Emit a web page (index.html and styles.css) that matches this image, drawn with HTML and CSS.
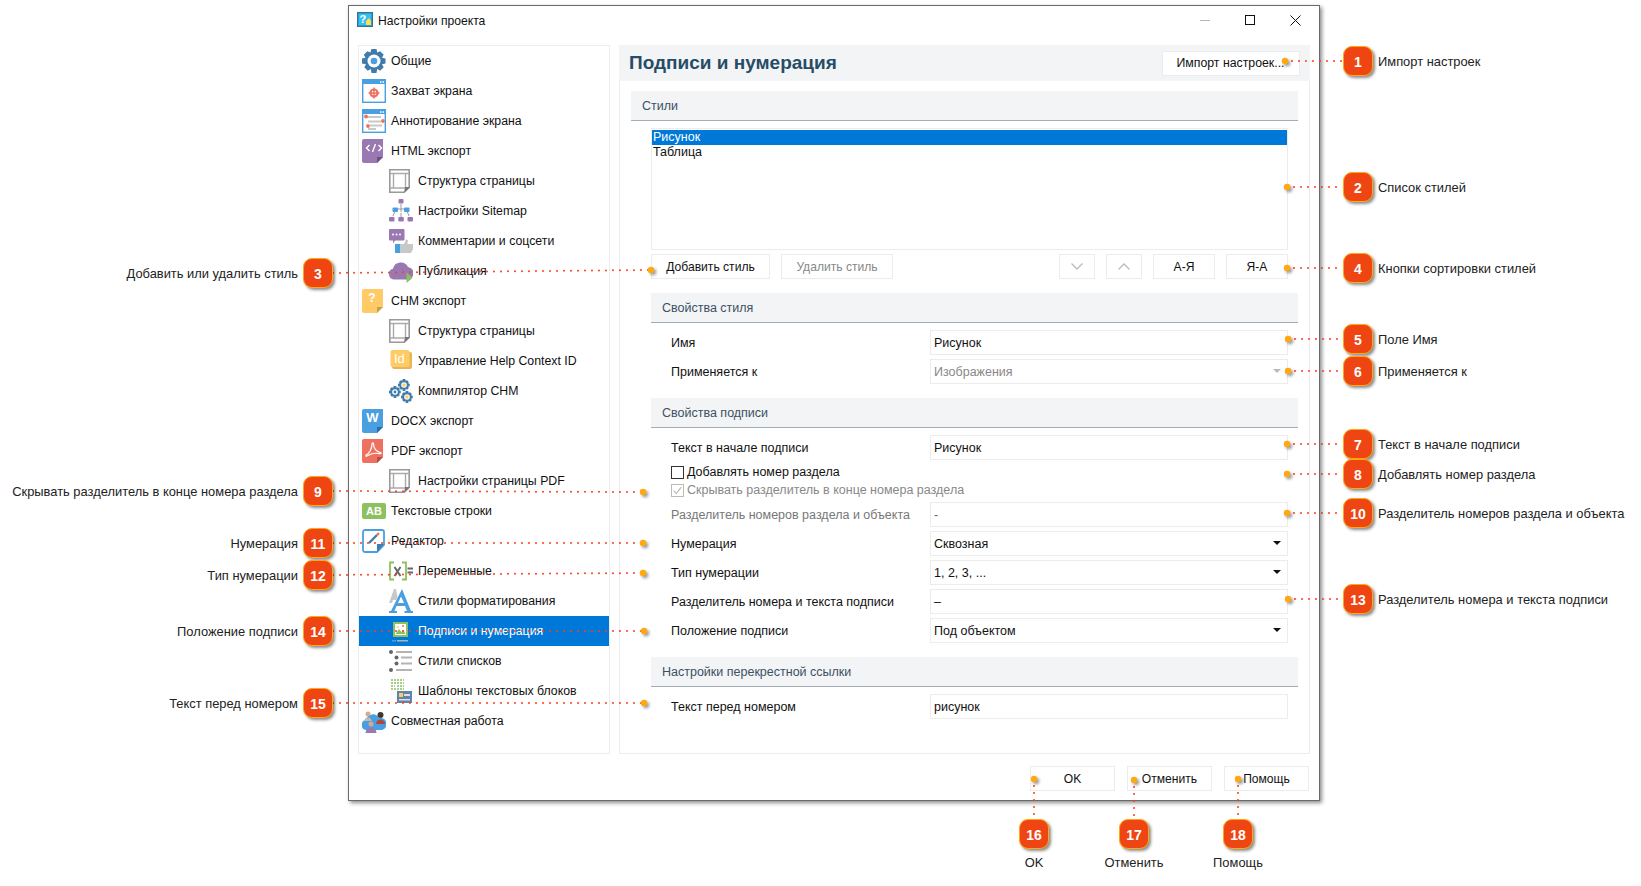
FILE: index.html
```html
<!DOCTYPE html>
<html lang="ru">
<head>
<meta charset="utf-8">
<title>Настройки проекта</title>
<link rel="stylesheet" href="styles.css">
</head>
<body>
<svg class="defs" width="0" height="0" aria-hidden="true">
  <symbol id="i-page" viewBox="0 0 24 24">
    <path d="M.8.8h19.400v17.500l-5 4.900H.8z" fill="#fff" stroke="#999" stroke-width="1.600"/>
    <path d="M1 4.500h19M1 19h14M4.500 4.500V19M16.500 4.500V18" fill="none" stroke="#aaa" stroke-width="1.400"/>
    <path d="M20.500 18v.5l-5 5V18z" fill="#777"/>
  </symbol>
  <symbol id="i-gear" viewBox="0 0 24 24">
    <path fill="#3f7cab" d="M9.500 0h5l.7 3.600 3-1.300 3.500 3.500-1.700 2.900 3.500.8v5l-3.500.8 1.700 2.900-3.500 3.500-3-1.700-.7 4h-5l-.7-4-3 1.700-3.500-3.500 1.700-2.900L0 14.500v-5l3.500-.8-1.700-2.900 3.500-3.500 3 1.300z"/>
  </symbol>
</svg>

<div class="window">
  <div class="titlebar">
    <svg class="app-icon" viewBox="0 0 16 16"><rect x=".5" y=".5" width="15" height="14" fill="#1fa3d8" stroke="#3a6f8f"/><rect x="2" y="2" width="12" height="11" fill="#37c0ee"/><text x="2.500" y="11" class="app-q">?</text><path d="M9 9l3-3 2 3v4H9z" fill="#ffe04a"/></svg>
    <span class="title-text">Настройки проекта</span>
    <div class="win-controls">
      <span class="wc wc-min"></span>
      <span class="wc wc-max"></span>
      <svg class="wc-close" viewBox="0 0 11 11"><path d="M.5.500l10 10M10.500.500l-10 10" stroke="#111" stroke-width="1" fill="none"/></svg>
    </div>
  </div>

  <div class="columns">
    <nav class="sidebar">
      <div class="nav-row">
        <svg class="ico" viewBox="0 0 24 24"><use href="#i-gear"/><circle cx="12" cy="12" r="6.500" fill="#fff"/><circle cx="12" cy="12" r="3.300" fill="#4a9fe0"/></svg>
        <span>Общие</span>
      </div>
      <div class="nav-row">
        <svg class="ico" viewBox="0 0 24 24"><rect x=".7" y=".7" width="22.600" height="22.600" fill="#fff" stroke="#4a9fe0" stroke-width="1.400"/><rect x="1" y="1" width="22" height="4" fill="#4a9fe0"/><rect x="18" y="2.300" width="1.500" height="1.500" fill="#fff"/><rect x="20.500" y="2.300" width="1.500" height="1.500" fill="#fff"/><circle cx="12" cy="14" r="3.500" fill="none" stroke="#f0705f" stroke-width="2.200"/><path d="M12 8.500v11M6.500 14h11" stroke="#f0705f" stroke-width="1.500"/></svg>
        <span>Захват экрана</span>
      </div>
      <div class="nav-row">
        <svg class="ico" viewBox="0 0 24 24"><rect x=".7" y=".7" width="22.600" height="22.600" fill="#fff" stroke="#4a9fe0" stroke-width="1.400"/><rect x="1" y="1" width="22" height="4" fill="#4a9fe0"/><rect x="18" y="2.300" width="1.500" height="1.500" fill="#fff"/><rect x="20.500" y="2.300" width="1.500" height="1.500" fill="#fff"/><path d="M3 8h16M6 12.500h13M8 16.500h12M6 20h8" stroke="#c8c8c8" stroke-width="2.200"/><circle cx="4" cy="7.500" r="1.900" fill="#f0705f"/><circle cx="21" cy="12" r="1.900" fill="#f0705f"/><circle cx="6" cy="17" r="1.900" fill="#f0705f"/></svg>
        <span>Аннотирование экрана</span>
      </div>
      <div class="nav-row">
        <svg class="ico" viewBox="0 0 24 24"><path d="M2 0h19v18l-6 6H2a2 2 0 0 1-2-2V2a2 2 0 0 1 2-2z" fill="#9a78b2"/><path d="M21 18l-6 6v-6z" fill="#6c5480"/><path d="M7.500 6L4.500 9l3 3M16.500 6l3 3-3 3M13.500 5l-3 8" fill="none" stroke="#fff" stroke-width="1.400"/></svg>
        <span>HTML экспорт</span>
      </div>
      <div class="nav-row sub">
        <svg class="ico"><use href="#i-page"/></svg>
        <span>Структура страницы</span>
      </div>
      <div class="nav-row sub">
        <svg class="ico" viewBox="0 0 24 24"><path d="M12 5v8M6 11v-1h12v1M4 17l2-5M12 14v4M20 17l-2-5" stroke="#999" fill="none" stroke-width="1"/><rect x="9.500" y="0" width="5" height="4.500" rx="1" fill="#9a78b2"/><rect x="3.500" y="8.500" width="5.500" height="4.500" rx="1" fill="#4a9fe0"/><rect x="15" y="8.500" width="5.500" height="4.500" rx="1" fill="#4a9fe0"/><rect x="0" y="18" width="5.500" height="4.500" rx="1" fill="#9a78b2"/><rect x="9.300" y="18" width="5.500" height="4.500" rx="1" fill="#9a78b2"/><rect x="18.500" y="18" width="5.500" height="4.500" rx="1" fill="#9a78b2"/></svg>
        <span>Настройки Sitemap</span>
      </div>
      <div class="nav-row sub">
        <svg class="ico" viewBox="0 0 24 24"><path d="M1 0h13.500a1 1 0 0 1 1 1v9.500a1 1 0 0 1-1 1H6l-2 3v-3H1a1 1 0 0 1-1-1V1a1 1 0 0 1 1-1z" fill="#9a78b2"/><circle cx="4" cy="5.500" r="1" fill="#fff"/><circle cx="7.500" cy="5.500" r="1" fill="#fff"/><circle cx="11" cy="5.500" r="1" fill="#fff"/><rect x="6" y="15" width="5.500" height="9" fill="#4a9fe0"/><path d="M12 15h3l2-4.500 2 .5-.5 4H24v5l-2 4H12z" fill="#c8c8c8"/></svg>
        <span>Комментарии и соцсети</span>
      </div>
      <div class="nav-row sub">
        <svg class="ico" viewBox="0 0 24 24"><path d="M5.500 20.500a5.500 5.500 0 0 1-1.500-10.800 8 8 0 0 1 15-1.700 6.300 6.300 0 0 1 0 12.500z" fill="#9a78b2"/><path d="M17.500 13.500V24l6-5z" fill="#8cc060"/></svg>
        <span>Публикация</span>
      </div>
      <div class="nav-row">
        <svg class="ico" viewBox="0 0 24 24"><path d="M2 0h19v18l-6 6H2a2 2 0 0 1-2-2V2a2 2 0 0 1 2-2z" fill="#ffcb66"/><path d="M21 18l-6 6v-6z" fill="#c9a050"/><text x="10" y="13" class="ico-text q">?</text></svg>
        <span>CHM экспорт</span>
      </div>
      <div class="nav-row sub">
        <svg class="ico"><use href="#i-page"/></svg>
        <span>Структура страницы</span>
      </div>
      <div class="nav-row sub">
        <svg class="ico" viewBox="0 0 24 24"><rect x="3" y="3" width="20" height="17" rx="2" fill="#e6b755"/><rect x="1.500" y="1" width="19" height="17" rx="2" fill="#ffcb66"/><text x="5" y="14" class="ico-text idt">Id</text></svg>
        <span>Управление Help Context ID</span>
      </div>
      <div class="nav-row sub">
        <svg class="ico" viewBox="0 0 24 24">
          <use href="#i-gear" x="0" y="7" width="12" height="12"/><circle cx="6" cy="13" r="2.800" fill="#fff"/><circle cx="6" cy="13" r="1.400" fill="#3f7cab"/>
          <use href="#i-gear" x="9" y="0" width="12" height="12"/><circle cx="15" cy="6" r="2.800" fill="#fff"/><circle cx="15" cy="6" r="1.700" fill="#ffcb66"/>
          <use href="#i-gear" x="12" y="12" width="12" height="12"/><circle cx="18" cy="18" r="2.800" fill="#fff"/><circle cx="18" cy="18" r="1.700" fill="#ffcb66"/>
        </svg>
        <span>Компилятор CHM</span>
      </div>
      <div class="nav-row">
        <svg class="ico" viewBox="0 0 24 24"><path d="M2 0h19v18l-6 6H2a2 2 0 0 1-2-2V2a2 2 0 0 1 2-2z" fill="#4a9fe0"/><path d="M21 18l-6 6v-6z" fill="#2d6f9f"/><text x="10.500" y="13" class="ico-text w">W</text></svg>
        <span>DOCX экспорт</span>
      </div>
      <div class="nav-row">
        <svg class="ico" viewBox="0 0 24 24"><path d="M2 0h19v18l-6 6H2a2 2 0 0 1-2-2V2a2 2 0 0 1 2-2z" fill="#f0705f"/><path d="M21 18l-6 6v-6z" fill="#b04f42"/><path d="M4 16c3-1 6-6 6-11 0-1.500 1.500-1.500 1.500 0 0 4 3 8 7 8.500 1 .2.500 1.500-.5 1.200-4-.8-9 0-11.500 1.500-1.500 1-3 1-2.500.8z" fill="none" stroke="#fff" stroke-width="1.200"/></svg>
        <span>PDF экспорт</span>
      </div>
      <div class="nav-row sub">
        <svg class="ico"><use href="#i-page"/></svg>
        <span>Настройки страницы PDF</span>
      </div>
      <div class="nav-row">
        <svg class="ico" viewBox="0 0 24 24"><rect x="0" y="4" width="24" height="16" rx="2" fill="#8cc060"/><text x="12" y="16" class="ico-text ab">AB</text></svg>
        <span>Текстовые строки</span>
      </div>
      <div class="nav-row">
        <svg class="ico" viewBox="0 0 24 24"><path d="M3 1h17a2 2 0 0 1 2 2v13l-7 7H3a2 2 0 0 1-2-2V3a2 2 0 0 1 2-2z" fill="#fff" stroke="#4a9fe0" stroke-width="1.800"/><path d="M22 15l-7 8v-8z" fill="#3f7cab"/><path d="M7 14l8-8" stroke="#3f7cab" stroke-width="2.400"/><path d="M15 6l2-2" stroke="#f0705f" stroke-width="2.400"/></svg>
        <span>Редактор</span>
      </div>
      <div class="nav-row sub">
        <svg class="ico" viewBox="0 0 24 24"><path d="M5 3.500H1v17h4M13 3.500h4v17h-4" fill="none" stroke="#8cc060" stroke-width="1.800"/><path d="M5.500 8l6 9M11.500 8l-6 9" stroke="#666" stroke-width="2"/><path d="M18.500 9.500H24M18.500 13.500H24" stroke="#666" stroke-width="2"/></svg>
        <span>Переменные</span>
      </div>
      <div class="nav-row sub">
        <svg class="ico" viewBox="0 0 24 24"><path d="M5 0L0 14h3l1-3h3l1.500-3L7 0z" fill="#c8c8c8"/><path d="M13 0L2 22H0v2h8v-2H5.500l2-5H16l2 5h-2.500v2H24v-2h-2zM9 14l3-6.500 3 6.500z" fill="#4a9fe0" fill-rule="evenodd"/></svg>
        <span>Стили форматирования</span>
      </div>
      <div class="nav-row sub selected">
        <svg class="ico" viewBox="0 0 24 24"><rect x="4" y="3" width="15" height="15" fill="#8cc060"/><rect x="6" y="5" width="11" height="11" fill="#fff"/><path d="M6.500 15l3.500-5 2.500 3 2-2 2 4z" fill="#8cc060"/><circle cx="9" cy="8" r="1" fill="#ffcb66"/><circle cx="14" cy="7" r="1" fill="#f0705f"/><rect x="3" y="21" width="4" height="1.500" fill="#4a9fe0"/><rect x="8" y="21" width="11" height="1.500" fill="#aab4bc"/></svg>
        <span>Подписи и нумерация</span>
      </div>
      <div class="nav-row sub">
        <svg class="ico" viewBox="0 0 24 24"><g fill="#666"><circle cx="2" cy="3" r="2"/><circle cx="7.500" cy="8.500" r="2"/><circle cx="7.500" cy="14.500" r="2"/><circle cx="2" cy="21" r="2"/></g><path d="M7 3h16M12 8.500h11M12 14.500h11M7 21h16" stroke="#b4b4b4" stroke-width="1.800"/></svg>
        <span>Стили списков</span>
      </div>
      <div class="nav-row sub">
        <svg class="ico" viewBox="0 0 24 24"><path d="M2 1h13M2 4h13M2 7h4M8 7h7M2 10h13" stroke="#8cc060" stroke-width="1.500" stroke-dasharray="2 1" fill="none"/><rect x="8" y="12" width="15" height="12" fill="#5f86a8"/><rect x="10" y="14" width="4" height="4" fill="#ffcb66"/><rect x="15" y="15" width="6" height="2" fill="#dde"/><rect x="10" y="20" width="11" height="1.500" fill="#dde"/></svg>
        <span>Шаблоны текстовых блоков</span>
      </div>
      <div class="nav-row">
        <svg class="ico" viewBox="0 0 24 24"><path d="M5 21a5 5 0 0 1-1-10 7 7 0 0 1 13-2 6 6 0 0 1 3 12z" fill="#4a9fe0"/><circle cx="6" cy="5" r="2.500" fill="#d9a98c"/><path d="M2.500 12a3.500 3.500 0 0 1 7 0z" fill="#bbb"/><circle cx="18.500" cy="6" r="3" fill="#43362e"/><path d="M14 15a4.500 4.500 0 0 1 9 0z" fill="#b0483d"/><circle cx="9" cy="15" r="2.500" fill="#d9a98c"/><path d="M3.500 24a5.500 5.500 0 0 1 11 0z" fill="#9a78b2"/></svg>
        <span>Совместная работа</span>
      </div>
    </nav>

    <main class="main">
      <header class="main-head">
        <h1>Подписи и нумерация</h1>
        <div class="btn btn-import">Импорт настроек...</div>
      </header>
      <div class="panel">
        <div class="sec-head sec-top">Стили</div>
        <div class="indent">
          <div class="listbox">
            <div class="list-item active">Рисунок</div>
            <div class="list-item">Таблица</div>
          </div>
          <div class="list-actions">
            <div class="btn btn-add">Добавить стиль</div>
            <div class="btn btn-del disabled">Удалить стиль</div>
            <div class="spacer"></div>
            <div class="btn btn-arrow"><svg viewBox="0 0 12 7"><path d="M.5.500L6 6l5.500-5.500" fill="none" stroke="#bbb" stroke-width="1.300"/></svg></div>
            <div class="btn btn-arrow"><svg viewBox="0 0 12 7"><path d="M.5 6.500L6 1l5.500 5.500" fill="none" stroke="#bbb" stroke-width="1.300"/></svg></div>
            <div class="btn btn-sort">А-Я</div>
            <div class="btn btn-sort">Я-А</div>
          </div>

          <div class="sec-head">Свойства стиля</div>
          <div class="form">
            <div class="row"><label>Имя</label><div class="field">Рисунок</div></div>
            <div class="row"><label>Применяется к</label><div class="field select off">Изображения</div></div>
          </div>

          <div class="sec-head">Свойства подписи</div>
          <div class="form">
            <div class="row"><label>Текст в начале подписи</label><div class="field">Рисунок</div></div>
            <div class="checks">
              <div class="check"><span class="box"></span>Добавлять номер раздела</div>
              <div class="check off"><span class="box"><svg viewBox="0 0 13 13"><path d="M2 6.500l3 3.500 6-7.500" fill="none" stroke="#b0b0b0" stroke-width="1.200"/></svg></span>Скрывать разделитель в конце номера раздела</div>
            </div>
            <div class="row off"><label>Разделитель номеров раздела и объекта</label><div class="field">-</div></div>
            <div class="row"><label>Нумерация</label><div class="field select">Сквозная</div></div>
            <div class="row"><label>Тип нумерации</label><div class="field select">1, 2, 3, ...</div></div>
            <div class="row"><label>Разделитель номера и текста подписи</label><div class="field">–</div></div>
            <div class="row"><label>Положение подписи</label><div class="field select">Под объектом</div></div>
          </div>

          <div class="sec-head">Настройки перекрестной ссылки</div>
          <div class="form">
            <div class="row"><label>Текст перед номером</label><div class="field">рисунок</div></div>
          </div>
        </div>
      </div>
    </main>
  </div>

  <footer class="footer">
    <div class="btn btn-foot">OK</div>
    <div class="btn btn-foot">Отменить</div>
    <div class="btn btn-foot">Помощь</div>
  </footer>
</div>

<svg class="leaders" width="1641" height="886" aria-hidden="true">
  <g class="lines">
    <path d="M1285 61H1343M1287 187H1343M1287 268H1343M1288 339H1343M1288 371H1343M1287 444H1343M1287 474H1343M1287 513H1343M1288 599H1343"/>
    <path d="M333 273L651 270M333 491L643 492M333 543H643M333 575L643 573M333 631H644M333 703H644"/>
    <path d="M1034 779V819M1134 780V819M1238 779V819"/>
  </g>
  <g class="pins">
    <circle cx="1285" cy="61" r="3.200"/><circle cx="1287" cy="187" r="3.200"/><circle cx="1287" cy="268" r="3.200"/><circle cx="1288" cy="339" r="3.200"/><circle cx="1288" cy="371" r="3.200"/><circle cx="1287" cy="444" r="3.200"/><circle cx="1287" cy="474" r="3.200"/><circle cx="1287" cy="513" r="3.200"/><circle cx="1288" cy="599" r="3.200"/>
    <circle cx="651" cy="270" r="3.200"/><circle cx="643" cy="492" r="3.200"/><circle cx="643" cy="543" r="3.200"/><circle cx="643" cy="573" r="3.200"/><circle cx="644" cy="631" r="3.200"/><circle cx="644" cy="703" r="3.200"/>
    <circle cx="1034" cy="779" r="3.200"/><circle cx="1134" cy="780" r="3.200"/><circle cx="1238" cy="779" r="3.200"/>
  </g>
</svg>

<div class="callout right c1"><b>1</b><span>Импорт настроек</span></div>
<div class="callout right c2"><b>2</b><span>Список стилей</span></div>
<div class="callout right c4"><b>4</b><span>Кнопки сортировки стилей</span></div>
<div class="callout right c5"><b>5</b><span>Поле Имя</span></div>
<div class="callout right c6"><b>6</b><span>Применяется к</span></div>
<div class="callout right c7"><b>7</b><span>Текст в начале подписи</span></div>
<div class="callout right c8"><b>8</b><span>Добавлять номер раздела</span></div>
<div class="callout right c10"><b>10</b><span>Разделитель номеров раздела и объекта</span></div>
<div class="callout right c13"><b>13</b><span>Разделитель номера и текста подписи</span></div>
<div class="callout left c3"><span>Добавить или удалить стиль</span><b>3</b></div>
<div class="callout left c9"><span>Скрывать разделитель в конце номера раздела</span><b>9</b></div>
<div class="callout left c11"><span>Нумерация</span><b>11</b></div>
<div class="callout left c12"><span>Тип нумерации</span><b>12</b></div>
<div class="callout left c14"><span>Положение подписи</span><b>14</b></div>
<div class="callout left c15"><span>Текст перед номером</span><b>15</b></div>
<div class="callout bottom c16"><b>16</b><span>OK</span></div>
<div class="callout bottom c17"><b>17</b><span>Отменить</span></div>
<div class="callout bottom c18"><b>18</b><span>Помощь</span></div>
</body>
</html>
```

FILE: styles.css
```css
* { box-sizing: border-box; }
html, body { margin: 0; padding: 0; }
body {
  position: relative;
  width: 1641px;
  height: 886px;
  overflow: hidden;
  background: #fff;
  font-family: "Liberation Sans", Arial, sans-serif;
  font-size: 12.5px;
  color: #111;
}
.defs { position: absolute; }

/* window */
.window {
  position: absolute;
  left: 348px;
  top: 5px;
  width: 972px;
  height: 796px;
  background: #fff;
  border: 1px solid #6a6a6a;
  box-shadow: 2px 2px 4px rgba(0,0,0,.45);
  display: flex;
  flex-direction: column;
}
.titlebar {
  height: 39px;
  flex: none;
  display: flex;
  align-items: flex-start;
  padding: 6px 0 0 8px;
}
.app-icon { width: 16px; height: 16px; flex: none; }
.app-q { font: bold 11px "Liberation Sans", sans-serif; fill: #fff; }
.title-text { margin-left: 5px; line-height: 18px; font-size: 12.15px; }
.win-controls {
  margin-left: auto;
  display: flex;
  align-items: flex-start;
  padding: 3px 18px 0 0;
}
.wc { display: block; }
.wc-min { width: 10px; height: 1px; margin: 5px 35px 0 0; background: #b5b5b5; }
.wc-max { width: 10px; height: 10px; border: 1px solid #111; margin-right: 35px; }
.wc-close { width: 11px; height: 11px; display: block; }

.columns {
  flex: none;
  height: 709px;
  display: flex;
  gap: 9px;
  padding-left: 9px;
}

/* sidebar */
.sidebar {
  width: 252px;
  flex: none;
  border: 1px solid #ececec;
  background: #fff;
  font-size: 12.3px;
}
.nav-row {
  height: 30px;
  display: flex;
  align-items: center;
  gap: 5px;
  padding-left: 3px;
  white-space: nowrap;
}
.nav-row.sub { padding-left: 30px; }
.nav-row.selected { background: #0078d7; color: #fff; }
.ico { width: 24px; height: 24px; flex: none; }
.ico-text { font-family: "Liberation Sans", sans-serif; font-weight: bold; fill: #fff; text-anchor: middle; }
.ico-text.q { font-size: 12px; }
.ico-text.w { font-size: 13px; }
.ico-text.idt { font-size: 13px; text-anchor: start; font-weight: normal; }
.ico-text.ab { font-size: 11px; }

/* main */
.main {
  width: 691px;
  flex: none;
  display: flex;
  flex-direction: column;
}
.main-head {
  height: 36px;
  flex: none;
  background: #f3f4f6;
  display: flex;
  align-items: center;
  justify-content: space-between;
  padding: 0 10px 0 10px;
}
.main-head h1 {
  margin: 0;
  font-size: 19px;
  font-weight: bold;
  color: #274c66;
}
.panel {
  flex: 1;
  width: 691px;
  border: 1px solid #ececec;
  border-top: 0;
  padding: 10px 11px 0 11px;
}
.sec-head {
  height: 30px;
  background: #f3f4f6;
  border-bottom: 1px solid #a3adb5;
  padding-left: 11px;
  line-height: 30px;
  color: #3c5064;
}
.indent { padding-left: 20px; }
.listbox {
  width: 637px;
  height: 122px;
  margin-top: 7px;
  border: 1px solid #ececec;
  padding: 1px 0;
  line-height: 15px;
}
.list-item { height: 15px; padding-left: 1px; }
.list-item.active { background: #0078d7; color: #fff; }
.list-actions {
  width: 637px;
  display: flex;
  gap: 11px;
  margin: 4px 0 14px;
}
.spacer { flex: 1; }

.btn {
  height: 25px;
  display: flex;
  align-items: center;
  justify-content: center;
  background: #fff;
  border: 1px solid #ececec;
  color: #111;
  flex: none;
  font-size: 12.1px;
}
.btn.disabled { color: #888; }
.btn-import { width: 138px; font-size: 12.3px; padding-right: 1px; }
.btn-add { width: 119px; }
.btn-del { width: 112px; }
.btn-arrow { width: 36px; }
.btn-arrow svg { width: 12px; height: 7px; }
.btn-sort { width: 62px; }
.btn-foot { width: 85px; }

.form {
  display: flex;
  flex-direction: column;
  gap: 4px;
  padding: 7px 0 14px 20px;
}
.row { height: 25px; display: flex; align-items: center; }
.row label { width: 259px; flex: none; }
.field {
  width: 358px;
  height: 25px;
  border: 1px solid #ececec;
  padding-left: 3px;
  line-height: 25px;
  position: relative;
}
.select::after {
  content: "";
  position: absolute;
  right: 6px;
  top: 9px;
  border-left: 4px solid transparent;
  border-right: 4px solid transparent;
  border-top: 4px solid #111;
}
.field.off { color: #888; }
.select.off::after { border-top-color: #bbb; }
.row.off { color: #777; }
.row.off .field { color: #666; }

.checks { display: flex; flex-direction: column; gap: 2px; }
.check { height: 16px; display: flex; align-items: center; gap: 3px; }
.check.off { color: #888; }
.box {
  width: 13px;
  height: 13px;
  border: 1px solid #333;
  flex: none;
  display: block;
}
.check.off .box { border-color: #bbb; }
.box svg { display: block; width: 11px; height: 11px; }

.footer {
  flex: 1;
  display: flex;
  justify-content: flex-end;
  gap: 12px;
  padding: 12px 10px 0 0;
}

/* annotations */
.leaders { position: absolute; left: 0; top: 0; pointer-events: none; }
.lines path {
  fill: none;
  stroke: #ff3b1a;
  stroke-width: 2;
  stroke-linecap: round;
  stroke-dasharray: 0 7;
}
.pins circle { fill: #ffa80f; }
.pins { filter: drop-shadow(2px 2px 1.5px rgba(0,0,0,.4)); }

.callout {
  position: absolute;
  display: flex;
  align-items: center;
  gap: 5px;
  color: #222;
  white-space: nowrap;
  font-size: 12.9px;
}
.callout span { padding-top: 1px; }
.callout b {
  width: 30px;
  height: 30px;
  flex: none;
  display: flex;
  align-items: center;
  justify-content: center;
  padding-top: 1px;
  border-radius: 9px;
  background: #ee4512;
  border: 1px solid #ffa80f;
  box-shadow: 2px 2px 3px rgba(0,0,0,.45);
  color: #fff;
  font-size: 14px;
  font-weight: bold;
}
.callout.right { left: 1343px; }
.callout.left { right: 1308px; }
.callout.bottom {
  top: 819px;
  width: 120px;
  flex-direction: column;
  gap: 5px;
}
.c1 { top: 46px; }
.c2 { top: 172px; }
.c4 { top: 253px; }
.c5 { top: 324px; }
.c6 { top: 356px; }
.c7 { top: 429px; }
.c8 { top: 459px; }
.c10 { top: 498px; }
.c13 { top: 584px; }
.c3 { top: 258px; }
.c9 { top: 476px; }
.c11 { top: 528px; }
.c12 { top: 560px; }
.c14 { top: 616px; }
.c15 { top: 688px; }
.c16 { left: 974px; }
.c17 { left: 1074px; }
.c18 { left: 1178px; }
```
